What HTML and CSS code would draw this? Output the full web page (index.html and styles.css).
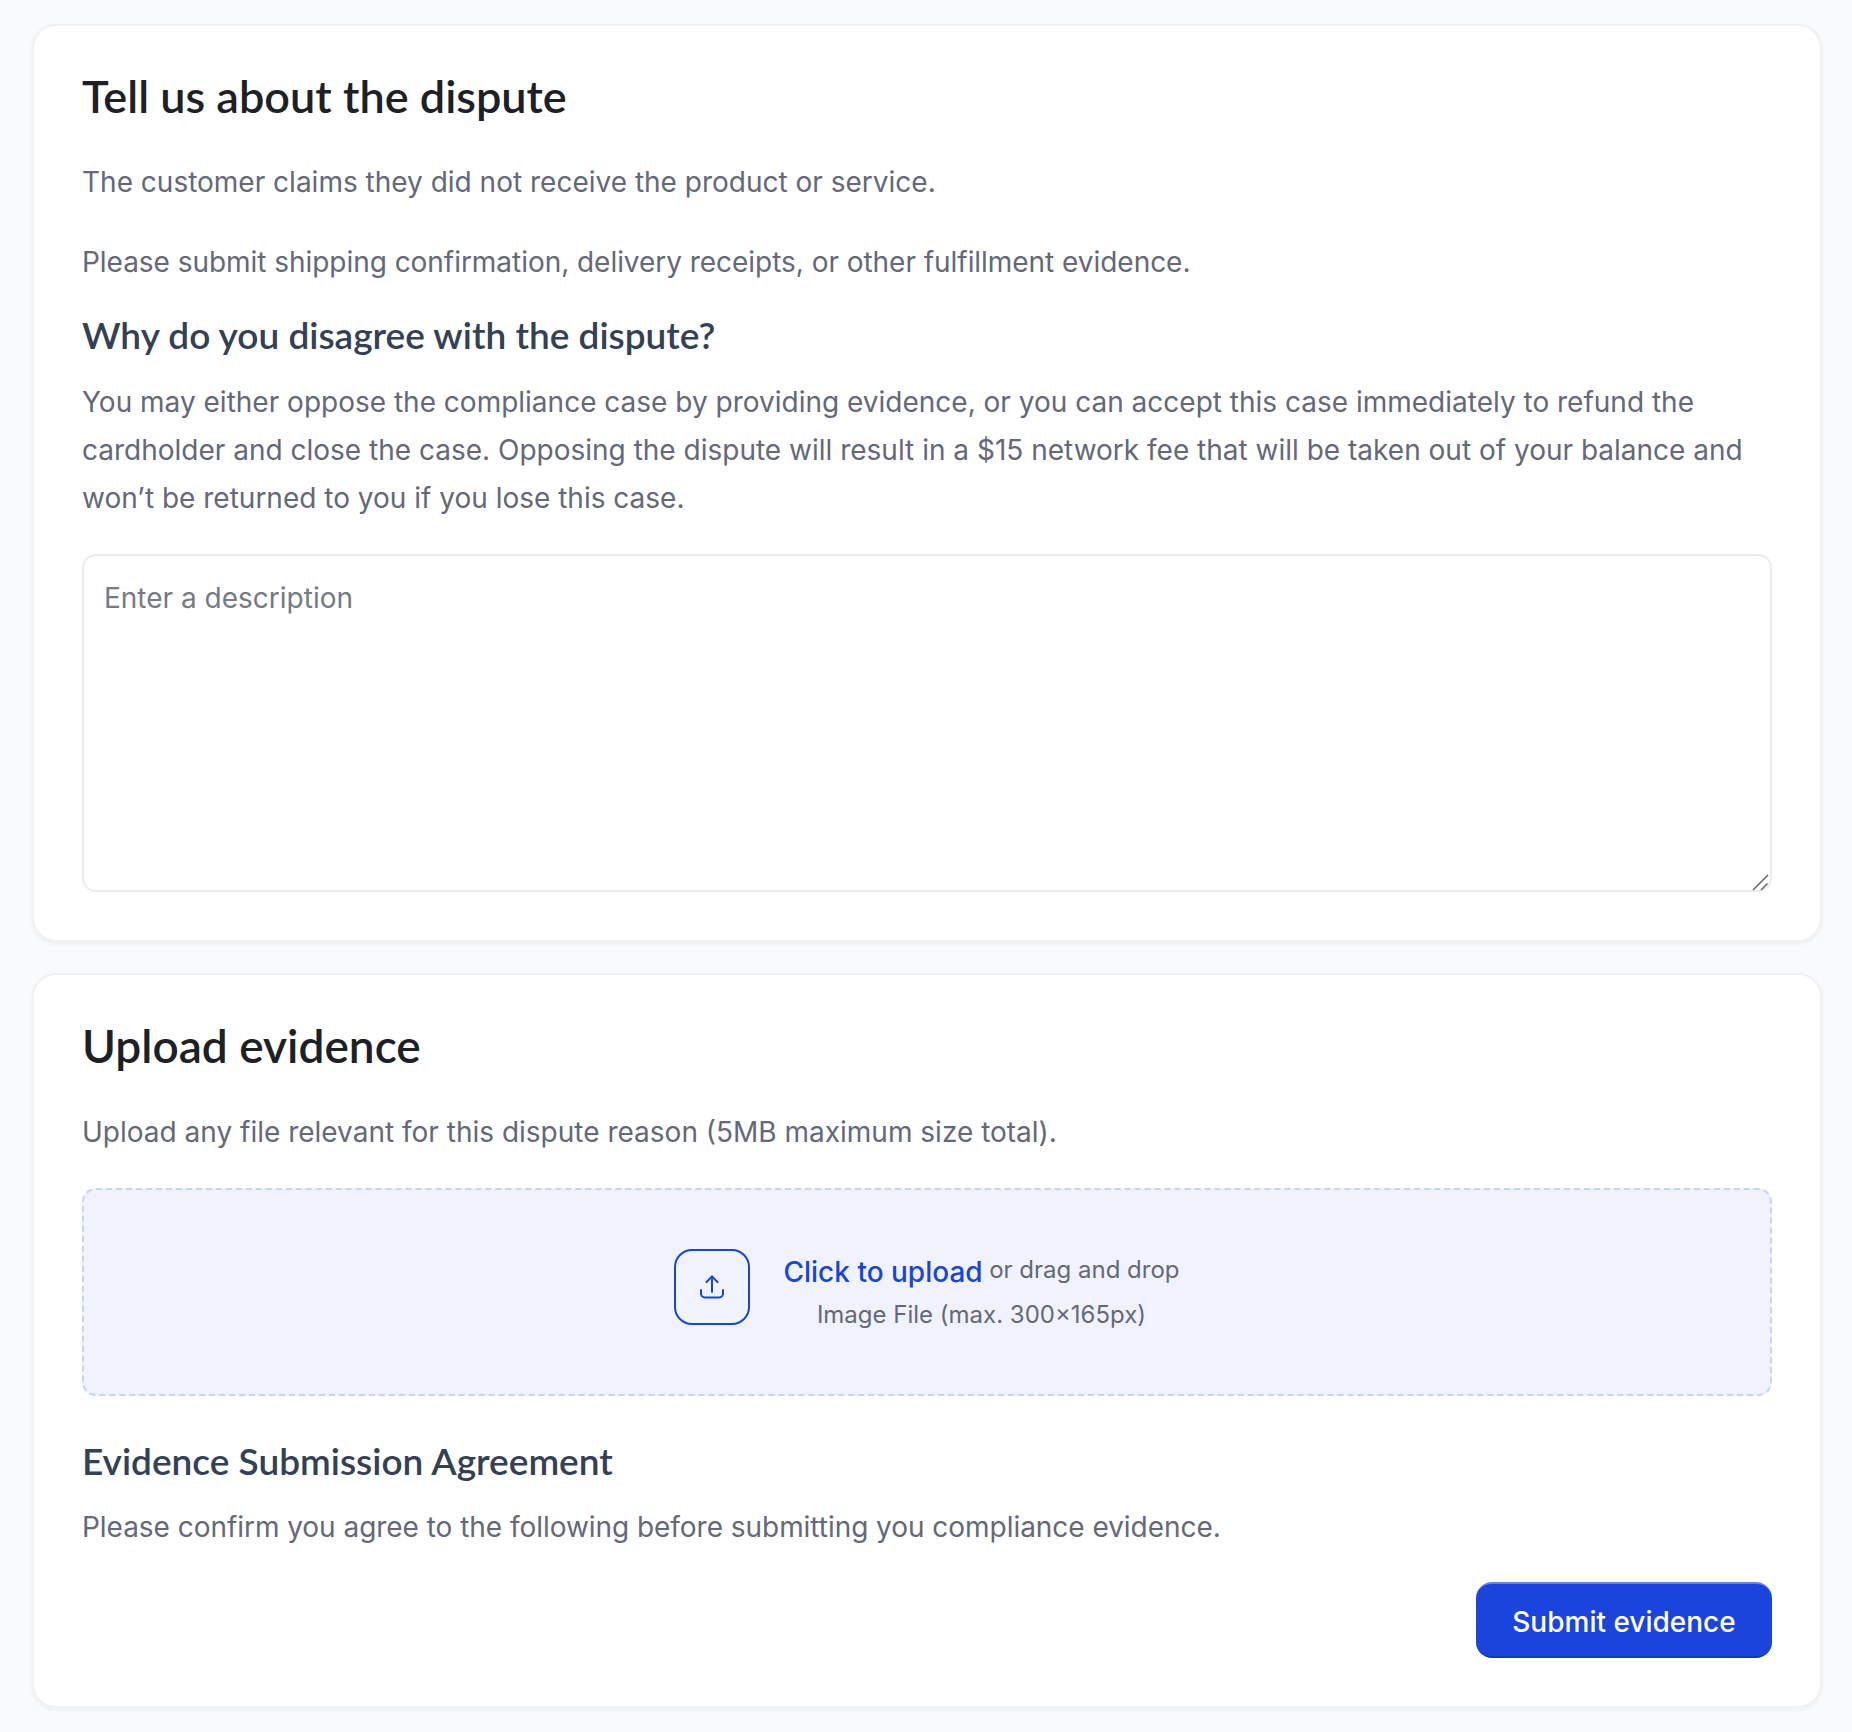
FILE: index.html
```html
<!DOCTYPE html>
<html lang="en">
<head>
    <meta charset="UTF-8">
    <title>Dispute evidence</title>
    <link rel="stylesheet" href="styles.css">
</head>
<body>
    <div class="page">
        <section class="card card-dispute">
            <h1>Tell us about the dispute</h1>
            <p class="claim">The customer claims they did not receive the product or service.</p>
            <p class="claim-help">Please submit shipping confirmation, delivery receipts, or other fulfillment evidence.</p>
            <h2>Why do you disagree with the dispute?</h2>
            <p class="explain">You may either oppose the compliance case by providing evidence, or you can accept this case immediately to refund the cardholder and close the case. Opposing the dispute will result in a $15 network fee that will be taken out of your balance and won’t be returned to you if you lose this case.</p>
            <div class="description-wrap">
                <textarea class="description" placeholder="Enter a description"></textarea>
                <svg class="resize-grip" width="18" height="18" viewBox="0 0 18 18" fill="none" stroke="#6b6b6b" stroke-width="1.6">
                    <path d="M1 17 16 2"/>
                    <path d="M9 17 15.5 10.5"/>
                </svg>
            </div>
        </section>

        <section class="card card-upload">
            <h1>Upload evidence</h1>
            <p class="upload-help">Upload any file relevant for this dispute reason (5MB maximum size total).</p>
            <div class="dropzone">
                <div class="upload-icon">
                    <svg width="28" height="28" viewBox="0 0 28 28" fill="none" stroke="#1a44d4" stroke-width="2" stroke-linecap="round" stroke-linejoin="round">
                        <path d="M14 19V3.5"/>
                        <path d="M8.5 9 14 3.5 19.500 9"/>
                        <path d="M3 17v3.500a4 4 0 0 0 4 4h14a4 4 0 0 0 4-4V17"/>
                    </svg>
                </div>
                <div class="upload-text">
                    <div><a class="upload-link">Click to upload</a> <span class="upload-or">or drag and drop</span></div>
                    <div class="upload-limit">Image File (max. 300×165px)</div>
                </div>
            </div>
            <h3>Evidence Submission Agreement</h3>
            <p class="agree">Please confirm you agree to the following before submitting you compliance evidence.</p>
            <div class="actions">
                <button class="submit">Submit evidence</button>
            </div>
        </section>
    </div>
</body>
</html>
```

FILE: styles.css
```css
* {
    margin: 0;
    padding: 0;
    box-sizing: border-box;
}

body {
    background-color: #f9fafb;
    font-family: Inter, "Liberation Sans", sans-serif;
    color: #646878;
}

.page {
    display: flex;
    flex-direction: column;
    gap: 31px;
    padding: 24px 30px 26px 32px;
}

.card {
    background: #fff;
    border: 2px solid #f0f1f3;
    border-radius: 24px;
    box-shadow: 0 2px 4px rgba(16, 24, 40, 0.05);
    padding: 0 48px;
}

.card-dispute {
    height: 918px;
}

.card-upload {
    height: 735px;
}

h1, h2, h3 {
    font-family: Lato, "Open Sans", sans-serif;
    font-weight: 600;
}

h1 {
    font-size: 45px;
    line-height: 56px;
    color: #1d2125;
    margin-top: 42px;
}

.card-upload h1 {
    font-size: 46px;
    margin-top: 43px;
}

h2 {
    font-size: 37px;
    line-height: 46px;
    color: #344054;
    margin-top: 26px;
}

h3 {
    font-size: 37px;
    line-height: 46px;
    color: #344054;
    margin-top: 42px;
}

p {
    font-size: 28px;
    line-height: 48px;
}

.claim {
    margin-top: 34px;
}

.claim-help {
    margin-top: 32px;
    letter-spacing: -0.04px;
}

.explain {
    margin-top: 20px;
}

.description-wrap {
    position: relative;
    margin-top: 32px;
}

.description {
    display: block;
    width: 100%;
    height: 338px;
    padding: 25px 20px;
    border: 2px solid #eaecf0;
    border-radius: 14px;
    font-family: inherit;
    font-size: 28px;
    line-height: 34px;
    outline: none;
    resize: none;
}

.description::placeholder {
    color: #757a85;
}

.resize-grip {
    position: absolute;
    right: 2px;
    bottom: 1px;
}

.upload-help {
    margin-top: 34px;
}

.dropzone {
    display: flex;
    align-items: center;
    justify-content: center;
    gap: 33px;
    height: 208px;
    margin-top: 32px;
    padding-bottom: 10px;
    background: #f0f3fe;
    border: 2px dashed #c7d3f4;
    border-radius: 14px;
}

.upload-icon {
    display: flex;
    align-items: center;
    justify-content: center;
    width: 76px;
    height: 76px;
    border: 2px solid #1a44d4;
    border-radius: 18px;
}

.upload-text {
    margin-top: 9px;
    text-align: center;
}

.upload-link {
    font-size: 28px;
    font-weight: 500;
    color: #1a44d4;
}

.upload-or, .upload-limit {
    font-size: 24px;
    color: #646878;
}

.upload-or {
    margin-left: 2px;
    vertical-align: 4px;
}

.upload-limit {
    margin-top: 11px;
}

.agree {
    margin-top: 19px;
    letter-spacing: -0.04px;
}

.actions {
    display: flex;
    justify-content: flex-end;
    margin-top: 31px;
}

.submit {
    width: 296px;
    height: 76px;
    padding-top: 4px;
    background: #1a44dc;
    border: none;
    border-top: 2px solid #6583e6;
    border-bottom: 2px solid #1638b4;
    border-radius: 16px;
    font-family: inherit;
    font-size: 28px;
    font-weight: 500;
    color: #fff;
}
```
